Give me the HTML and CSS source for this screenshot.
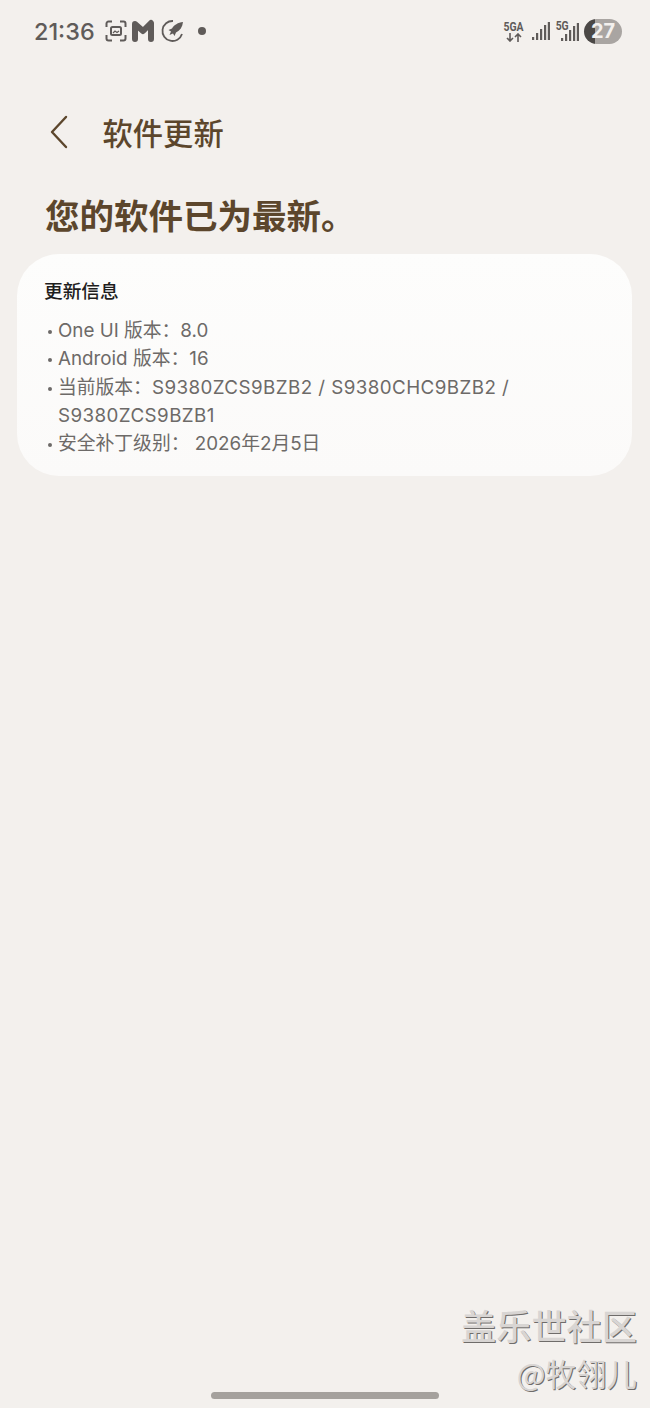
FILE: index.html
```html
<!DOCTYPE html>
<html lang="zh-CN">
<head>
<meta charset="utf-8">
<title>软件更新</title>
<link rel="stylesheet" href="styles.css">
</head>
<body>
<div class="screen">
  <div class="status">
    <div class="status-left">
      <span class="time">21:36</span>
      <svg class="ic-scan" viewBox="0 0 22 22" width="22" height="22" fill="none" stroke="#5f5b59" stroke-width="2">
        <path d="M1.500 7V3.500A2 2 0 0 1 3.500 1.500H7M15 1.500h3.500a2 2 0 0 1 2 2V7M20.500 15v3.500a2 2 0 0 1-2 2H15M7 20.500H3.500a2 2 0 0 1-2-2V15"/>
        <rect x="6" y="7" width="10" height="8" rx="1.500"/>
        <path d="M8 13l2-2 2 1.500 2-1.500" stroke-width="1.200"/>
      </svg>
      <svg class="ic-m" viewBox="0 0 24 24" width="24" height="24" fill="none" stroke="#5f5b59" stroke-width="6" stroke-linecap="round" stroke-linejoin="round">
        <path d="M4 20V5L12 12 20 4V20"/>
      </svg>
      <svg class="ic-rocket" viewBox="0 0 24 24" width="24" height="24" fill="none" stroke="#5f5b59" stroke-width="1.800">
        <path d="M21 15A10 10 0 1 1 12 2"/>
        <path d="M22 3c-5 .5-9 3-11 6.500l-3.500 1.500 2.500 1.500L8.500 16l3.500-1.500 1.500 2.500 1.500-3.500c4-2 6.500-5.500 7-10.500z" fill="#5f5b59" stroke="none"/>
      </svg>
      <span class="dot"></span>
    </div>
    <div class="status-right">
      <div class="net">
        <span class="net-label">5GA</span>
        <svg viewBox="0 0 16 9" width="16" height="9" fill="none" stroke="#5f5b59" stroke-width="1.600">
          <path d="M4 0v8M1 5l3 3 3-3M12 9V1M9 4l3-3 3 3"/>
        </svg>
      </div>
      <svg class="bars" viewBox="0 0 18 20" width="18" height="20" fill="#5f5b59">
        <rect x="0" y="16" width="2.200" height="3"/><rect x="4" y="12" width="2.200" height="7"/><rect x="8" y="8" width="2.200" height="11"/><rect x="12" y="4" width="2.200" height="15"/><rect x="15.800" y="1" width="2.200" height="18"/>
      </svg>
      <div class="sim">
        <span class="net-label small">5G</span>
        <svg class="bars" viewBox="0 0 18 20" width="18" height="20" fill="#5f5b59">
          <rect x="0" y="16" width="2.200" height="3"/><rect x="4" y="12" width="2.200" height="7"/><rect x="8" y="8" width="2.200" height="11"/><rect x="12" y="4" width="2.200" height="15"/><rect x="15.800" y="1" width="2.200" height="18"/>
        </svg>
      </div>
      <div class="battery"><span class="level">27</span></div>
    </div>
  </div>

  <header class="appbar">
    <svg class="back" viewBox="0 0 20 34" width="20" height="34" fill="none" stroke="#5c462c" stroke-width="2.400" stroke-linecap="round" stroke-linejoin="round">
      <path d="M17 2L3 17l14 15"/>
    </svg>
    <h1 class="appbar-title">软件更新</h1>
  </header>

  <h2 class="headline">您的软件已为最新。</h2>

  <section class="card">
    <h3 class="card-title">更新信息</h3>
    <ul class="info">
      <li>One UI 版本：8.0</li>
      <li>Android 版本：16</li>
      <li>当前版本：<span class="code">S9380ZCS9BZB2 / S9380CHC9BZB2 /</span> <span class="code">S9380ZCS9BZB1</span></li>
      <li>安全补丁级别： 2026年2月5日</li>
    </ul>
  </section>

  <div class="watermark">
    <div class="wm-main">盖乐世社区</div>
    <div class="wm-sub">@牧翎儿</div>
  </div>
  <div class="home-bar"></div>
</div>
</body>
</html>
```

FILE: styles.css
```css
* { box-sizing: border-box; margin: 0; padding: 0; }
html, body { width: 650px; height: 1408px; overflow: hidden; }
body {
  background: #f3f0ed;
  font-family: "Noto Sans CJK SC", "Noto Sans", sans-serif;
}
.screen {
  position: relative;
  width: 650px;
  height: 1408px;
  padding-top: 16px;
}
.status {
  display: flex;
  justify-content: space-between;
  align-items: center;
  height: 30px;
  padding: 0 28px 0 34px;
}
.status-left { display: flex; align-items: center; }
.time {
  font-family: "Inter", sans-serif;
  font-size: 23.400px;
  font-weight: 500;
  color: #5f5b59;
  margin-right: 10px;
}
.ic-m { margin-left: 4px; }
.ic-rocket { margin-left: 6px; }
.dot {
  width: 8px;
  height: 8px;
  border-radius: 50%;
  background: #5f5b59;
  margin-left: 13px;
}
.status-right { display: flex; align-items: center; }
.net { display: flex; flex-direction: column; align-items: center; width: 18px; margin-right: 9px; }
.net-label {
  font-family: "Roboto", sans-serif;
  font-size: 13px;
  font-weight: 700;
  line-height: 12px;
  color: #5f5b59;
  transform: scaleX(.8);
}
.sim { display: flex; align-items: flex-start; margin-left: 5px; margin-right: 5px; height: 22px; }
.sim .small { margin-left: -1px; margin-right: -7px; }
.sim .bars { margin-left: -2px; margin-top: 2px; }
.battery {
  width: 38px;
  height: 25px;
  border-radius: 13px;
  background: linear-gradient(90deg, #4b4846 0, #4b4846 28%, #a9a5a2 28%, #a9a5a2 100%);
  display: flex;
  align-items: center;
  justify-content: center;
}
.level {
  font-family: "Inter", sans-serif;
  font-size: 20px;
  font-weight: 700;
  color: #f3f0ed;
}
.appbar {
  display: flex;
  align-items: center;
  height: 44px;
  margin-top: 64px;
  padding-left: 49px;
}
.appbar-title {
  font-size: 30.300px;
  line-height: 44px;
  font-weight: 500;
  color: #5c462c;
  margin-left: 33.500px;
}
.headline {
  font-size: 34.500px;
  line-height: 52px;
  font-weight: 700;
  color: #5c462c;
  margin-top: 34px;
  padding-left: 45px;
}
.card {
  margin: 14px 18px 0 17px;
  height: 222px;
  padding: 23px 27px 0;
  background: linear-gradient(180deg, #fdfdfc 0, #fbfaf9 100%);
  border-radius: 42px;
}
.card-title {
  font-size: 18.700px;
  line-height: 26px;
  font-weight: 500;
  color: #1f1e1e;
}
.info {
  list-style: none;
  margin-top: 14px;
  padding-left: 14px;
  padding-right: 80px;
}
.info li {
  position: relative;
  font-family: "Inter", "Noto Sans CJK SC", sans-serif;
  font-size: 18.800px;
  line-height: 28.300px;
  color: #6d6a68;
}
.info .code { letter-spacing: .42px; }
.info li::before {
  content: "";
  position: absolute;
  left: -10px;
  top: 13px;
  width: 4px;
  height: 4px;
  border-radius: 50%;
  background: #6d6a68;
}
.watermark {
  position: absolute;
  right: 13px;
  top: 1300px;
  text-align: right;
}
.wm-main {
  font-size: 35.200px;
  line-height: 50px;
  font-weight: 500;
  color: #d8d5d3;
  text-shadow: 1px 1px 0 #6f6c6a;
}
.wm-sub {
  font-size: 30.500px;
  line-height: 46px;
  color: #d8d5d3;
  text-shadow: 1px 1px 0 #6f6c6a;
}
.home-bar {
  position: absolute;
  left: 211px;
  top: 1392px;
  width: 228px;
  height: 7px;
  border-radius: 4px;
  background: #a5a19d;
}
```
